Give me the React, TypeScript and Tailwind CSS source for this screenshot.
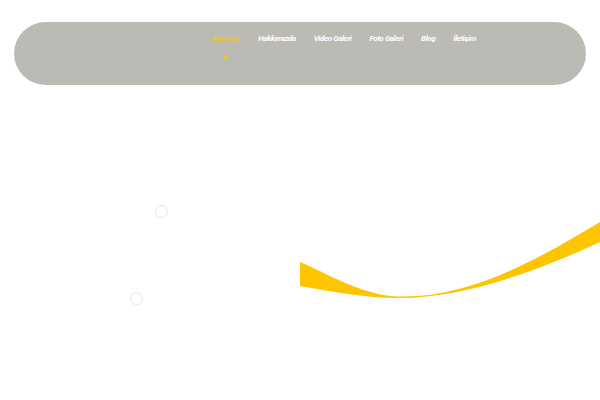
import React from 'react'

const menu = ['Anasayfa', 'Hakkımızda', 'Video Galeri', 'Foto Galeri', 'Blog', 'İletişim']

const Ring = ({ className }: { className: string }) => (
  <div className={`absolute rounded-full border border-gray-200 ${className}`} />
)

const App = () => {
  return (
    <div className="relative w-[600px] h-[400px] bg-white overflow-hidden" style={{ fontFamily: 'Roboto, "Noto Sans", sans-serif' }}>
      <header className="mx-[14px] mt-[22px] h-[63px] rounded-full bg-[#bbbab4] flex items-start">
        <div className="ml-[44px] mt-[12px] w-[17px] h-[17px] rounded-full border border-[#c0bfb9]" />
        <nav className="ml-[136px] mt-[12px] flex gap-[18px]">
          {menu.map((item, i) => (
            <div key={item} className="flex flex-col items-center">
              <a
                className={`text-[8px] leading-[10px] font-bold italic tracking-[-0.4px] ${i === 0 ? 'text-[#e9c43c]' : 'text-white'}`}
              >
                {item}
              </a>
              {i === 0 && <span className="mt-[11px] w-[3px] h-[4px] bg-[#e9c43c]" />}
            </div>
          ))}
        </nav>
      </header>

      <Ring className="left-[155px] top-[205px] w-[13px] h-[13px]" />
      <Ring className="left-[130px] top-[292px] w-[13px] h-[13px]" />

      <svg className="absolute left-[300px] top-[215px]" width="300" height="90" viewBox="300 215 300 90">
        <path
          d="M300,262 C330,275 355,291 390,296 C465,302 540,258 600,222 L600,242 C540,270 465,298 400,298 C365,298 335,292 300,286 Z"
          fill="#fdc500"
        />
      </svg>
    </div>
  )
}

export default App
